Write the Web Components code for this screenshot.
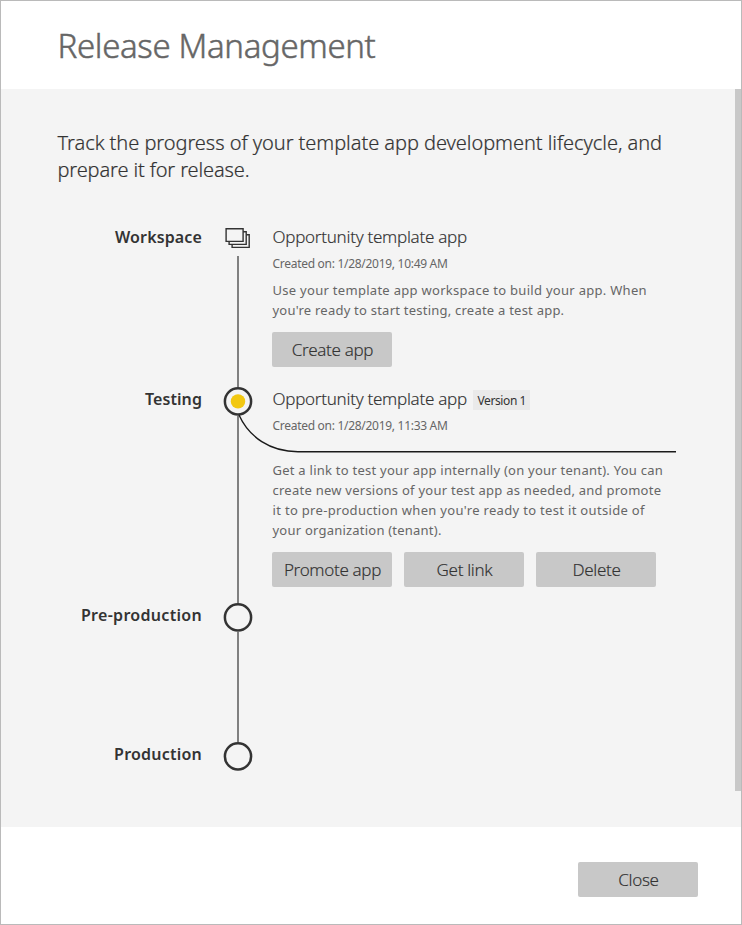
<!DOCTYPE html>
<html lang="en">
<head>
<meta charset="utf-8">
<title>Release Management</title>
<style>
html, body { margin: 0; height: 100%; }
body { font-family: "Noto Sans", "Open Sans", sans-serif; color: #333; }
</style>
</head>
<body>
<release-dialog>
  <span slot="title">Release Management</span>
  <text-line slot="intro" track="-0.05">Track the progress of your template app development lifecycle, and</text-line>
  <text-line slot="intro" track="-0.13">prepare it for release.</text-line>

  <stage-row label="Workspace" track="0.13" kind="workspace" style="height:162px">
    <app-card name="Opportunity template app" created="Created on: 1/28/2019, 10:49 AM">
      <text-line track="0.29">Use your template app workspace to build your app. When</text-line>
      <text-line track="0.23">you're ready to start testing, create a test app.</text-line>
      <app-button slot="actions">Create app</app-button>
    </app-card>
  </stage-row>
  <stage-row label="Testing" track="0.08" kind="active" style="height:216px">
    <app-card name="Opportunity template app" created="Created on: 1/28/2019, 11:33 AM" version="Version 1" branch>
      <text-line track="0.25">Get a link to test your app internally (on your tenant). You can</text-line>
      <text-line track="0.25">create new versions of your test app as needed, and promote</text-line>
      <text-line track="0.32">it to pre-production when you're ready to test it outside of</text-line>
      <text-line track="0.22">your organization (tenant).</text-line>
      <app-button slot="actions">Promote app</app-button>
      <app-button slot="actions">Get link</app-button>
      <app-button slot="actions">Delete</app-button>
    </app-card>
  </stage-row>
  <stage-row label="Pre-production" track="0.3" kind="empty" style="height:139px"></stage-row>
  <stage-row label="Production" track="0.22" kind="empty" last style="height:30px"></stage-row>

  <app-button slot="footer">Close</app-button>
</release-dialog>

<script>
const shadow = (el, html) => { el.attachShadow({ mode: 'open' }).innerHTML = html; };

customElements.define('text-line', class extends HTMLElement {
  connectedCallback() {
    shadow(this, `<style>:host{display:block;white-space:nowrap;letter-spacing:${this.getAttribute('track') || 0}px}</style><slot></slot>`);
  }
});

customElements.define('app-button', class extends HTMLElement {
  connectedCallback() {
    shadow(this, `<style>
      :host{display:block;width:120px;height:35px}
      button{width:100%;height:100%;display:block;border:0;border-radius:2px;padding:0 0 0 1px;background:#c8c8c8;color:#333;
        font:300 17px/35px "Noto Sans",sans-serif;letter-spacing:-.32px;text-align:center;-webkit-text-stroke:.15px #333}
    </style><button><slot></slot></button>`);
  }
});

customElements.define('app-card', class extends HTMLElement {
  connectedCallback() {
    const version = this.getAttribute('version');
    const branch = this.hasAttribute('branch');
    shadow(this, `<style>
      :host{display:block;position:relative}
      .head{display:flex;height:24px;gap:6px}
      .name{font-size:17px;font-weight:300;line-height:24px;letter-spacing:-.28px;white-space:nowrap;padding-left:.5px;-webkit-text-stroke:.15px #333}
      .tag{margin-top:3px;height:20px;width:57px;box-sizing:border-box;padding-left:1px;text-align:center;background:#eaeaea;font-size:12px;line-height:21px;letter-spacing:-.4px;white-space:nowrap}
      .created{margin-top:5px;font-size:12px;line-height:20px;letter-spacing:-.29px;color:#666;white-space:nowrap;padding-left:.5px}
      .desc{margin-top:${branch ? 24 : 6}px;font-size:13px;line-height:20px;color:#666;padding-left:.5px}
      .actions{display:flex;gap:12px;margin-top:12px}
      svg{position:absolute;left:-36px;top:24px;overflow:visible}
    </style>
    <div class="head"><span class="name">${this.getAttribute('name')}</span>${version ? `<span class="tag">${version}</span>` : ''}</div>
    <div class="created">${this.getAttribute('created')}</div>
    ${branch ? '<svg width="440" height="44" fill="none" stroke="#1a1a1a" stroke-width="1.4"><path d="M3 4C13 26 34 40.7 62 40.7H440"/></svg>' : ''}
    <div class="desc"><slot></slot></div>
    <div class="actions"><slot name="actions"></slot></div>`);
  }
});

customElements.define('stage-row', class extends HTMLElement {
  connectedCallback() {
    const kind = this.getAttribute('kind');
    const mark = kind === 'workspace'
      ? `<svg class="mark" width="30" height="30" fill="#f4f4f4" stroke="#333" stroke-width="1.4"><path d="M9.1 9.7h17.1v12.7H9.1z"/><path d="M6.1 6.7h17.1v12.7H6.1z"/><path d="M3.1 3.7h17v12.7h-17z"/></svg>`
      : `<svg class="mark" width="30" height="30"><circle cx="15" cy="14.4" r="13.1" fill="#f4f4f4" stroke="#333" stroke-width="2.5"/>${kind === 'active' ? '<circle cx="15" cy="14.4" r="7.2" fill="#f2c811"/>' : ''}</svg>`;
    shadow(this, `<style>
      :host{display:grid;grid-template-columns:145px 30px 1fr;column-gap:0}
      .label{font-size:16px;font-weight:600;line-height:24px;text-align:right;letter-spacing:${this.getAttribute('track')}px;white-space:nowrap}
      .rail{display:flex;flex-direction:column;align-items:center;width:30px;margin-left:21px}
      .mark{display:block;flex:none}
      .line{flex:1;width:2px;background:#808080;margin-top:${kind === 'workspace' ? 1 : -1}px}
      .body{margin-left:40px}
    </style>
    <div class="label">${this.getAttribute('label')}</div>
    <div class="rail">${mark}${this.hasAttribute('last') ? '' : '<div class="line"></div>'}</div>
    <div class="body"><slot></slot></div>`);
  }
});

customElements.define('release-dialog', class extends HTMLElement {
  connectedCallback() {
    shadow(this, `<style>
      :host{display:flex;flex-direction:column;box-sizing:border-box;width:742px;height:925px;border:1px solid #bababa;background:#fff}
      header{height:88px;padding-left:56.5px;font-size:33px;line-height:90px;font-weight:300;letter-spacing:-.35px;color:#666;white-space:nowrap;-webkit-text-stroke:.5px #666}
      main{height:738px;display:flex;justify-content:space-between;background:#f4f4f4}
      .content{padding:40px 0 0 56.5px;width:620px}
      .intro{font-size:20px;font-weight:300;line-height:27px;margin-bottom:42px;-webkit-text-stroke:.2px #333}
      ::slotted(stage-row){margin-left:-.5px}
      .thumb{width:6px;height:702px;background:#c8c8c8}
      footer{flex:1;display:flex;justify-content:flex-end;padding:35px 43px 0 0}
    </style>
    <header><slot name="title"></slot></header>
    <main><div class="content"><div class="intro"><slot name="intro"></slot></div><slot></slot></div><div class="thumb"></div></main>
    <footer><slot name="footer"></slot></footer>`);
  }
});
</script>
</body>
</html>
